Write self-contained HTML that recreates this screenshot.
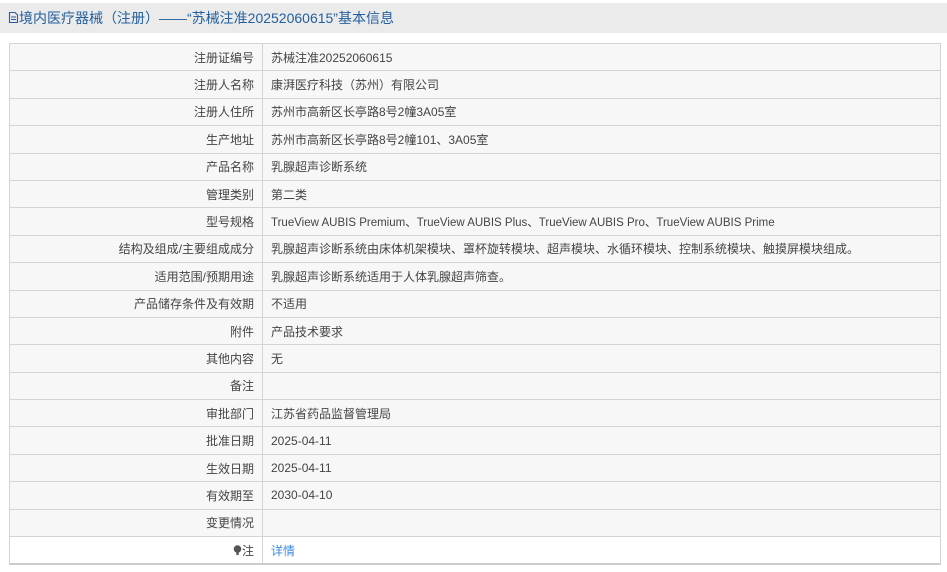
<!DOCTYPE html>
<html><head><meta charset="utf-8"><style>
body{margin:0;width:947px;height:572px;background:#fff;font-family:"Liberation Sans","Noto Sans CJK SC",sans-serif;font-size:12px;color:#444;overflow:hidden}
.hd{position:absolute;left:0;top:3px;width:947px;height:30px;background:#ebebeb;color:#245f9e;font-size:14px;line-height:30px;padding-left:8px;box-sizing:border-box}
table{position:absolute;left:9px;top:43px;width:932px;border-collapse:collapse;border:1px solid #d4d4d4;border-bottom:2px solid #ccc}
td{height:26.4px;padding:0;border:1px solid #d4d4d4;background:#f7f7f7;vertical-align:middle}
td.l{width:244px;text-align:right;padding-right:8px}
td.v{padding-left:8px}
tr.w td{background:#fff}
a{color:#3b8be0;text-decoration:none}
.n{font-size:11.5px}
</style></head><body>
<div class="hd"><svg width="11" height="13" viewBox="0 0 11 13" style="vertical-align:-1px"><path d="M1.5 1.5h5.5l2.5 2.5v7.5h-8z M3 6h5 M3 8.5h5" fill="none" stroke="#245f9e" stroke-width="1.1"/></svg>境内医疗器械（注册）——“苏械注准20252060615”基本信息</div>
<table>
<tr><td class="l">注册证编号</td><td class="v">苏械注准20252060615</td></tr>
<tr><td class="l">注册人名称</td><td class="v">康湃医疗科技（苏州）有限公司</td></tr>
<tr><td class="l">注册人住所</td><td class="v">苏州市高新区长亭路8号2幢3A05室</td></tr>
<tr><td class="l">生产地址</td><td class="v">苏州市高新区长亭路8号2幢101、3A05室</td></tr>
<tr><td class="l">产品名称</td><td class="v">乳腺超声诊断系统</td></tr>
<tr><td class="l">管理类别</td><td class="v">第二类</td></tr>
<tr><td class="l">型号规格</td><td class="v n">TrueView AUBIS Premium、TrueView AUBIS Plus、TrueView AUBIS Pro、TrueView AUBIS Prime</td></tr>
<tr><td class="l">结构及组成/主要组成成分</td><td class="v">乳腺超声诊断系统由床体机架模块、罩杯旋转模块、超声模块、水循环模块、控制系统模块、触摸屏模块组成。</td></tr>
<tr><td class="l">适用范围/预期用途</td><td class="v">乳腺超声诊断系统适用于人体乳腺超声筛查。</td></tr>
<tr><td class="l">产品储存条件及有效期</td><td class="v">不适用</td></tr>
<tr><td class="l">附件</td><td class="v">产品技术要求</td></tr>
<tr><td class="l">其他内容</td><td class="v">无</td></tr>
<tr><td class="l">备注</td><td class="v"></td></tr>
<tr><td class="l">审批部门</td><td class="v">江苏省药品监督管理局</td></tr>
<tr><td class="l">批准日期</td><td class="v">2025-04-11</td></tr>
<tr><td class="l">生效日期</td><td class="v">2025-04-11</td></tr>
<tr><td class="l">有效期至</td><td class="v">2030-04-10</td></tr>
<tr><td class="l">变更情况</td><td class="v"></td></tr>
<tr class="w"><td class="l"><svg width="9" height="11" viewBox="0 0 9 11" style="vertical-align:-1px"><circle cx="4.5" cy="4" r="3.8" fill="#555"/><rect x="3.3" y="7.5" width="2.4" height="2.5" fill="#555"/></svg>注</td><td class="v"><a>详情</a></td></tr>
</table>
</body></html>
